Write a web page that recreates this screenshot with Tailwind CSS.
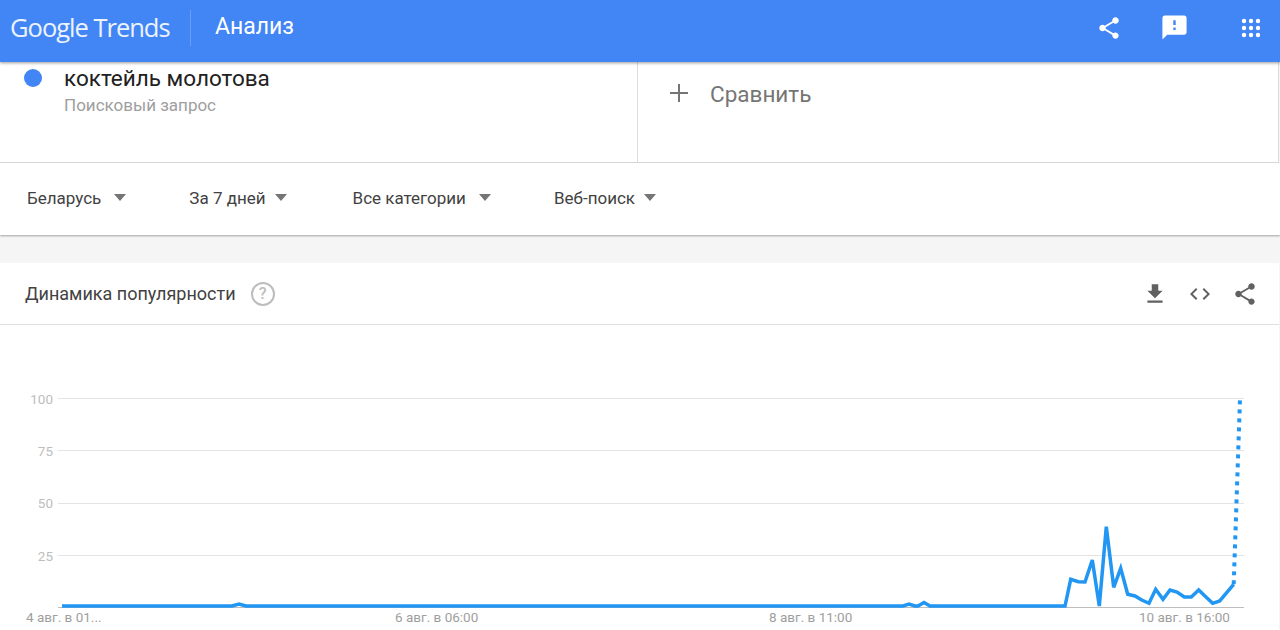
<!DOCTYPE html>
<html lang="ru">
  <head>
    <meta charset="UTF-8" />
    <title>Google Trends</title>
    <script src="https://cdn.jsdelivr.net/npm/@tailwindcss/browser@4"></script>
  </head>
  <body class="bg-[#f5f5f5] font-['Roboto',sans-serif] h-[630px] w-[1280px] overflow-hidden">
    <!-- top bar -->
    <header class="relative z-10 h-[62px] bg-[#4285f4] flex items-center pb-[7px] shadow-[0_1px_3px_rgba(0,0,0,0.4)] text-white">
      <div class="pl-[10px] w-[190px] font-['Open_Sans',sans-serif] text-[25.500px] tracking-[-1px] text-white/90 whitespace-nowrap">Google Trends</div>
      <div class="w-px h-[36px] bg-white/20"></div>
      <div class="ml-[24px] text-[23px] text-white">Анализ</div>
      <div class="ml-auto flex items-center">
        <svg class="w-[26px] h-[26px] mr-[38px]" viewBox="0 0 24 24" fill="#fff"><path d="M18 16.08c-.76 0-1.44.3-1.96.77L8.91 12.7c.05-.23.09-.46.09-.7s-.04-.47-.09-.7l7.05-4.11c.54.5 1.25.81 2.04.81 1.66 0 3-1.34 3-3s-1.34-3-3-3-3 1.34-3 3c0 .24.04.47.09.7L8.04 9.81C7.5 9.31 6.79 9 6 9c-1.66 0-3 1.34-3 3s1.34 3 3 3c.79 0 1.5-.31 2.04-.81l7.12 4.16c-.05.21-.08.43-.08.65 0 1.61 1.31 2.92 2.92 2.92s2.92-1.31 2.92-2.92-1.31-2.92-2.92-2.92z"/></svg>
        <svg class="w-[29px] h-[29px] mr-[52px]" viewBox="0 0 24 24" fill="#fff"><path d="M20 2H4c-1.1 0-2 .9-2 2v18l4-4h14c1.1 0 2-.9 2-2V4c0-1.1-.9-2-2-2zm-7 12h-2v-2h2v2zm0-4h-2V6h2v4z"/></svg>
        <svg class="w-[20px] h-[20px] mr-[19px]" viewBox="0 0 20 20" fill="#fff">
          <circle cx="3" cy="3" r="2.2"/><circle cx="10" cy="3" r="2.2"/><circle cx="17" cy="3" r="2.2"/>
          <circle cx="3" cy="10" r="2.2"/><circle cx="10" cy="10" r="2.2"/><circle cx="17" cy="10" r="2.2"/>
          <circle cx="3" cy="17" r="2.2"/><circle cx="10" cy="17" r="2.2"/><circle cx="17" cy="17" r="2.2"/>
        </svg>
      </div>
    </header>

    <div class="w-[1279px] bg-white">
      <!-- search terms -->
      <div class="flex h-[101px] border-b border-[#dcdcdc]">
        <div class="relative w-[638px] border-r border-[#dcdcdc]">
          <div class="absolute left-[24px] top-[7px] w-[18px] h-[18px] rounded-full bg-[#4285f4]"></div>
          <div class="pl-[64px] pt-[2px]">
            <div class="text-[22.500px] leading-[28px] text-[#212121]">коктейль молотова</div>
            <div class="mt-[3px] text-[17px] leading-[20px] text-[#9e9e9e]">Поисковый запрос</div>
          </div>
        </div>
        <div class="flex-1 flex items-start pl-[30px] pt-[18px] text-[#757575] border-r border-[#dcdcdc]">
          <svg class="w-[22px] h-[28px] -mt-[1px]" viewBox="0 0 22 28" fill="#757575"><path d="M2 13h8V5h2v8h8v2h-8v8h-2v-8H2z"/></svg>
          <span class="ml-[20px] text-[22.500px] leading-[28px]">Сравнить</span>
        </div>
      </div>
    </div>

    <!-- filters -->
    <div class="w-full h-[72px] bg-white flex items-center pl-[27px] text-[17px] text-[#424242] shadow-[0_1px_2px_rgba(0,0,0,0.35)]">
      <span>Беларусь</span>
      <span class="ml-[13px] mb-[3px] w-0 h-0 border-x-[6.500px] border-x-transparent border-t-[7px] border-t-[#757575]"></span>
      <span class="ml-[63px]">За 7 дней</span>
      <span class="ml-[9px] mb-[3px] w-0 h-0 border-x-[6.500px] border-x-transparent border-t-[7px] border-t-[#757575]"></span>
      <span class="ml-[66px]">Все категории</span>
      <span class="ml-[13px] mb-[3px] w-0 h-0 border-x-[6.500px] border-x-transparent border-t-[7px] border-t-[#757575]"></span>
      <span class="ml-[63px]">Веб-поиск</span>
      <span class="ml-[9px] mb-[3px] w-0 h-0 border-x-[6.500px] border-x-transparent border-t-[7px] border-t-[#757575]"></span>
    </div>

    <!-- interest over time card -->
    <section class="mt-[28px] w-[1279px] bg-white">
      <div class="h-[62px] flex items-center pl-[25px] border-b border-[#e0e0e0]">
        <span class="text-[18px] text-[#424242]">Динамика популярности</span>
        <span class="ml-[15px] w-[24px] h-[24px] rounded-full border-2 border-[#bdbdbd] text-[#bdbdbd] text-[16px] leading-[20px] font-medium text-center">?</span>
        <div class="ml-auto flex items-center text-[#616161]">
          <svg class="w-[26px] h-[26px] mr-[20px]" viewBox="0 0 24 24" fill="#616161"><path d="M19 9h-4V3H9v6H5l7 7 7-7zM5 18v2h14v-2H5z"/></svg>
          <svg class="w-[24px] h-[24px] mr-[20px]" viewBox="0 0 24 24" fill="#616161"><path d="M9.4 16.6 4.8 12l4.6-4.6L8 6l-6 6 6 6 1.400-1.400zm5.200 0 4.600-4.600-4.600-4.600L16 6l6 6-6 6-1.400-1.400z"/></svg>
          <svg class="w-[26px] h-[26px] mr-[21px]" viewBox="0 0 24 24" fill="#616161"><path d="M18 16.08c-.76 0-1.44.3-1.96.77L8.91 12.7c.05-.23.09-.46.09-.7s-.04-.47-.09-.7l7.05-4.11c.54.5 1.25.81 2.04.81 1.66 0 3-1.34 3-3s-1.34-3-3-3-3 1.34-3 3c0 .24.04.47.09.7L8.04 9.81C7.5 9.31 6.79 9 6 9c-1.66 0-3 1.34-3 3s1.34 3 3 3c.79 0 1.5-.31 2.04-.81l7.12 4.16c-.05.21-.08.43-.08.65 0 1.61 1.31 2.92 2.92 2.92s2.92-1.31 2.92-2.92-1.31-2.92-2.92-2.92z"/></svg>
        </div>
      </div>
      <!-- chart, coordinates kept in page pixels minus 325 -->
      <svg class="block" width="1279" height="305" viewBox="0 325 1279 305" font-family="Roboto, sans-serif">
        <g stroke="#e4e4e4" stroke-width="1">
          <line x1="58" x2="1244" y1="398.500" y2="398.500"/>
          <line x1="58" x2="1244" y1="450.500" y2="450.500"/>
          <line x1="58" x2="1244" y1="503.500" y2="503.500"/>
          <line x1="58" x2="1244" y1="555.500" y2="555.500"/>
          <line x1="58" x2="1244" y1="607.500" y2="607.500" stroke="#bdbdbd"/>
        </g>
        <g fill="#bdbdbd" text-anchor="end" font-size="13.500">
          <text x="53" y="403.500">100</text>
          <text x="53" y="455.500">75</text>
          <text x="53" y="508">50</text>
          <text x="53" y="560.500">25</text>
        </g>
        <g fill="#9e9e9e" font-size="13.500">
          <text x="26" y="622">4 авг. в 01...</text>
          <text x="395" y="622">6 авг. в 06:00</text>
          <text x="769" y="622">8 авг. в 11:00</text>
          <text x="1139" y="622">10 авг. в 16:00</text>
        </g>
        <polyline fill="none" stroke="#2196f3" stroke-width="3.500" stroke-linejoin="miter" points="62,606 232,606 239,604 246,606 903,606 909,604 915,606 918,606 924,602.500 930,606 1065,606 1070.700,579.300 1078.300,581.700 1085,582 1092.300,560 1099.300,606 1106.300,526.700 1113.700,587.300 1120.700,568.300 1127.700,594.300 1135,596 1141.700,600 1149,603.300 1155.700,589.300 1163,599.300 1170,590 1177,592 1184.300,597 1191.300,597 1198.700,590 1205.700,596.700 1212.700,603.300 1219.700,601 1226.700,592.700 1233.700,584.300"/>
        <line x1="1233.700" y1="584.300" x2="1240" y2="399" stroke="#2196f3" stroke-width="4" stroke-dasharray="4 5"/>
      </svg>
    </section>
  </body>
</html>
